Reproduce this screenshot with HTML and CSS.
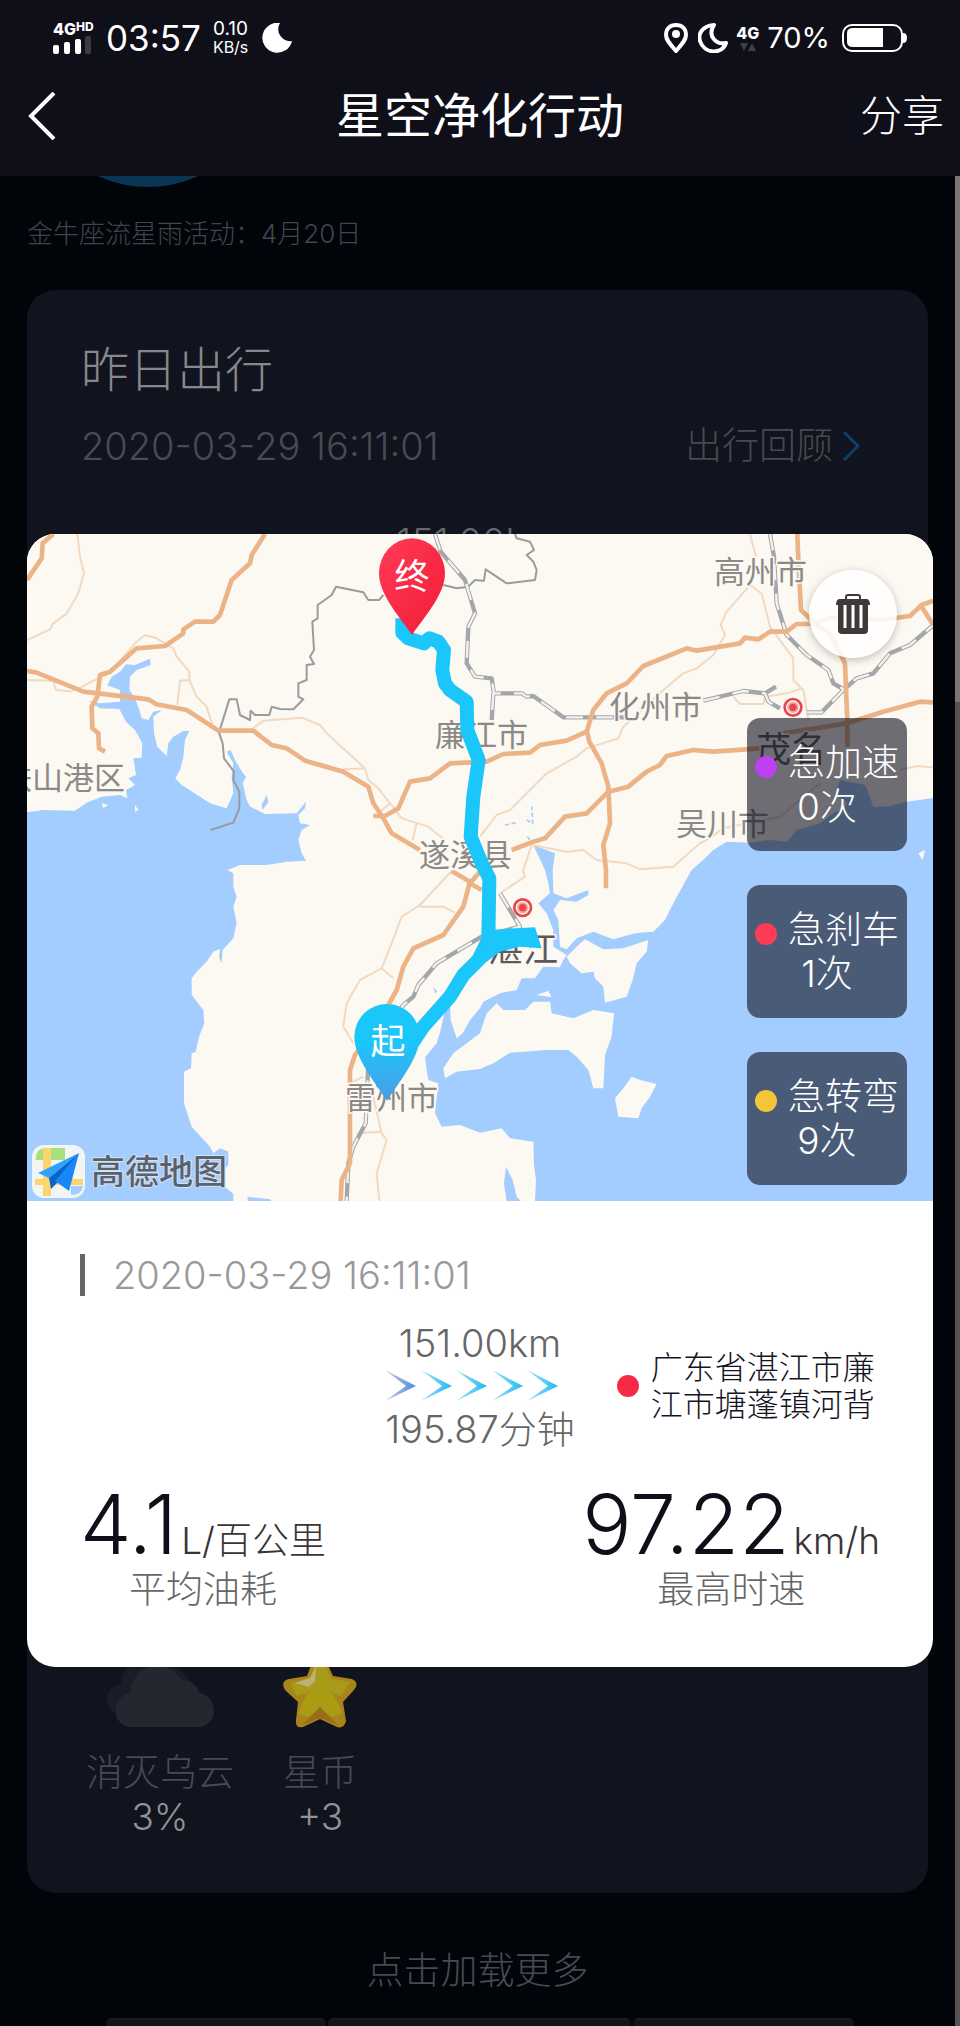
FILE: index.html
```html
<!DOCTYPE html>
<html lang="zh-CN">
<head>
<meta charset="utf-8">
<meta name="viewport" content="width=device-width, initial-scale=1">
<title>星空净化行动</title>
<link rel="stylesheet" href="styles.css">
</head>
<body>
<header class="top">
    <div class="status">
        <div class="signal">
            <span class="net">4G<small>HD</small></span>
            <svg width="38" height="18" viewBox="0 0 38 18"><g fill="#fff"><rect x="0" y="9" width="6" height="9" rx="2"/><rect x="11" y="6" width="6" height="12" rx="2"/><rect x="22" y="3" width="6" height="15" rx="2"/></g><rect x="32" y="0" width="6" height="18" rx="2" fill="#3b3b46"/></svg>
        </div>
        <span class="clock">03:57</span>
        <span class="speed">0.10<br><small>KB/s</small></span>
        <svg width="30" height="30" viewBox="0 0 30 30"><path d="M18 0A15 15 0 1 0 30 18A12 12 0 0 1 18 0Z" fill="#fff"/></svg>
        <div class="status-right">
            <svg width="24" height="30" viewBox="0 0 24 30"><path d="M12 2C6 2 2 6 2 12C2 17 6 21 12 28C18 21 22 17 22 12C22 6 18 2 12 2Z" fill="none" stroke="#fff" stroke-width="4"/><circle cx="12" cy="11" r="4" fill="#fff"/></svg>
            <svg class="moon" width="30" height="30" viewBox="0 0 30 30"><path d="M16 2C3 3 0 12 2 18C6 31 24 32 28 20C18 22 9 13 16 2Z" fill="none" stroke="#fff" stroke-width="4" stroke-linejoin="round"/></svg>
            <div class="data"><span>4G</span><svg width="16" height="8" viewBox="0 0 16 8" fill="#3f3f49"><path d="M0 0H8L4 8ZM8 8L12 0L16 8Z"/></svg></div>
            <span class="percent">70%</span>
            <svg width="65" height="28" viewBox="0 0 65 28"><rect x="1" y="1" width="59" height="26" rx="9" fill="none" stroke="#fff" stroke-width="2"/><path d="M11 4H41V23H11Q5 23 5 18V9Q5 4 11 4Z" fill="#fff"/><path d="M61 9Q65 9 65 14T61 19Z" fill="#fff"/></svg>
        </div>
    </div>
    <nav class="nav">
        <button class="back" type="button" aria-label="返回"><svg width="28" height="48" viewBox="0 0 28 48"><path d="M26 1L3 24L26 47" fill="none" stroke="#fff" stroke-width="4"/></svg></button>
        <h1>星空净化行动</h1>
        <button class="share" type="button">分享</button>
    </nav>
</header>
<main class="page">
    <svg class="planet" width="102" height="12" viewBox="0 0 102 12"><circle cx="51" cy="-108" r="119" fill="#0a3554"/></svg>
    <p class="activity">金牛座流星雨活动：4月20日</p>
    <section class="card">
        <h2>昨日出行</h2>
        <div class="card-row">
            <time>2020-03-29 16:11:01</time>
            <a class="review" href="#">出行回顾<svg width="18" height="30" viewBox="0 0 18 30"><path d="M2 1L16 15L2 29" fill="none" stroke="#0b3f70" stroke-width="3"/></svg></a>
        </div>
        <div class="trip">151.00km</div>
        <ul class="rewards">
            <li>
                <svg width="110" height="72" viewBox="0 0 110 72"><path d="M18 62C-4 54 -2 30 16 28C18 2 48 -2 58 10C72 6 88 26 92 36Z" fill="#191d27"/><path d="M27 71C7 71 4 42 25 37C30 2 66 4 76 24C86 24 92 30 95 37C115 42 113 71 92 71Z" fill="#23272f"/></svg>
                <span>消灭乌云</span>
                <strong>3%</strong>
            </li>
            <li>
                <svg width="74" height="72" viewBox="0 0 74 72"><path d="M30 4Q37 -4 43 5L50 20L69 23Q77 27 71 34L60 46L63 65Q61 73 54 71L37 63L20 71Q12 73 13 64L15 46L2 34Q-3 25 6 23L24 20Z" fill="#a8851b"/><path d="M37 2L49 23L67 26L58 40L48 36L37 28L26 36L14 40L7 27L26 22Z" fill="#a79b19"/><path d="M37 27Q54 38 59 58L49 61L37 53L25 61L16 58Q20 37 37 27Z" fill="#a99c13"/><path d="M37 51L55 69L37 62L19 69Z" fill="#966d1b"/><path d="M12 27L27 22L33 10L32 25L26 31Z" fill="#b9b07a"/></svg>
                <span>星币</span>
                <strong>+3</strong>
            </li>
        </ul>
    </section>
    <button class="more" type="button">点击加载更多</button>
    <div class="tabs"><i></i><i></i><i></i></div>
    <div class="scrollbar"><i></i></div>
</main>

<div class="modal" role="dialog" aria-label="行程">
    <div class="map">
        <svg class="map-canvas" viewBox="0 0 906 667">
            <defs>
                <linearGradient id="blue" x1="0" y1="0" x2="0" y2="1"><stop offset="0.4" stop-color="#1bc6fb"/><stop offset="1" stop-color="#4b9be4"/></linearGradient>
                <linearGradient id="red" x1="0" y1="0" x2="1" y2="1"><stop offset="0" stop-color="#ff3b55"/><stop offset="1" stop-color="#f21c38"/></linearGradient>
            </defs>
            <rect width="906" height="667" fill="#fcf9f2"/>
            <!-- 地图底图 -->
            <g transform="translate(-7 -4) scale(.33333)" fill="none" stroke-linejoin="round">
                <g fill="#a3ccff">
                    <path d="M15 848L70 840L165 842L200 818L245 800L300 795L322 805L318 780L345 765L325 745L348 735L340 685L365 683L367 640L345 600L318 575L298 537L240 535L205 512L240 520L300 515L300 480L262 466L275 440L300 425L318 403L345 405L390 386L392 405L350 420L330 440L328 480L345 505L358 540L365 565L385 570L400 545L425 540L400 560L402 610L412 650L440 678L445 640L460 620L490 603L508 603L495 630L490 680L480 720L466 745L485 765L540 800L570 820L620 835L640 790L635 740L640 700L620 665L632 660L645 690L668 728L678 740L668 760L680 810L690 830L735 852L830 850L858 815L855 835L835 855L840 880L870 885L845 900L835 930L845 970L858 992L800 995L740 1005L660 1005L622 1020L640 1030L640 1070L650 1100L640 1130L650 1180L640 1225L608 1260L605 1300L597 1280L600 1257L580 1265L560 1295L530 1325L515 1345L515 1395L550 1440L553 1480L537 1520L527 1565L515 1570L513 1615L492 1625L492 1720L515 1790L570 1850L580 1870L600 1855L625 1865L625 1905L610 1920L615 1970L640 1992L640 2015H15Z"/>
                    <path d="M682 2000L750 2008L755 2015H685ZM740 795L745 815L728 840L725 825ZM1240 1370L1252 1385L1245 1390Z"/>
                    <path d="M2745 803L2660 815L2610 828L2560 832L2550 800L2535 765L2460 750L2445 795L2480 815L2475 835L2440 850L2400 880L2330 900L2300 935L2250 930L2190 938L2120 935L2080 960L2055 985L2015 1020L1965 1110L1935 1170L1900 1205L1845 1210L1780 1228L1720 1205L1670 1225L1640 1258L1620 1250L1615 1170L1600 1140L1620 1110L1670 1115L1705 1095L1705 1080L1640 1105L1600 1090L1598 1020L1605 970L1540 945L1575 1020L1585 1060L1590 1090L1555 1120L1580 1150L1600 1200L1600 1250L1640 1275L1630 1290L1620 1312L1570 1310L1545 1345L1505 1345L1490 1380L1440 1390L1390 1415L1380 1435L1350 1470L1328 1510L1310 1525L1292 1470L1290 1420L1275 1440L1262 1500L1250 1540L1215 1582L1220 1620L1225 1650L1255 1660L1245 1750L1265 1790L1320 1785L1380 1808L1445 1795L1470 1825L1540 1835L1542 1905L1548 1950L1545 2015H2745Z"/>
                    <path d="M1458 1910L1478 1950L1490 2000L1505 2015H1460L1452 1960Z"/>
                </g>
                <g fill="#fcf9f2">
                    <path d="M1380 1510L1300 1570L1270 1615L1275 1645L1310 1625L1380 1617L1420 1600L1470 1568L1580 1560L1645 1560L1670 1580L1705 1620L1720 1675L1750 1675L1755 1575L1775 1520L1782 1450L1720 1440L1660 1465L1595 1450L1590 1415L1540 1415L1515 1440L1450 1440L1430 1420L1400 1450Z"/>
                    <path d="M1640 1280L1670 1250L1695 1228L1750 1258L1810 1255L1885 1230L1880 1265L1850 1300L1838 1350L1820 1400L1755 1418L1750 1370L1725 1345L1720 1325L1685 1330L1650 1300Z"/>
                    <path d="M1550 1395L1585 1382L1595 1402Z"/>
                    <path d="M1785 1705L1810 1675L1835 1640L1860 1650L1910 1662L1890 1700L1865 1735L1855 1765L1795 1760Z"/>
                    <path d="M245 820L265 825L250 835ZM345 825L355 840L345 845ZM2695 970L2715 960L2708 990Z"/>
                </g>
                <path d="M1455 885L1490 878M1520 870L1538 880L1535 830M1522 920L1535 935" stroke="#a3ccff" stroke-width="5" stroke-dasharray="12 8"/>
                <g stroke="#f2d9bf" stroke-width="6">
                    <path d="M172 12L180 80L192 130L175 190L140 250L100 280L90 298L21 330M185 470L270 428L345 340L375 315L410 325L460 355L470 380L508 425V450L480 452L472 525M508 450L530 500L560 530L580 595M21 450L100 452L108 480L150 484L190 470"/>
                    <path d="M700 595L730 572L845 563L900 585L920 610L1035 715L970 718M1035 715L1045 750L1075 775L1110 820L1075 850M1110 820L1145 865L1225 890L1268 925M1190 880L1178 930"/>
                    <path d="M1380 920L1430 855L1470 840L1580 730L1670 680L1700 655L1795 625L1810 590L1930 480L1990 430L2030 415L2080 375L2115 315L2102 285L2120 245L2190 165L2225 190L2250 290L2320 385V450L2350 480L2365 570M2190 12L2208 80M2140 500L2160 522H2230L2235 500L2300 490L2345 475"/>
                    <path d="M1510 1020L1535 945L1640 965L1690 960L1730 990L1820 1000L1860 1018L1960 1010L2040 940L2060 930L2110 895L2280 860L2400 760M2640 720L2690 708L2740 712M1440 1090L1515 1040L1508 1020"/>
                    <path d="M1295 1023L1200 1125L1145 1160L1115 1240L1085 1315L1120 1345M1200 1130H1270L1305 1148M1085 1315L1020 1350L980 1420L970 1490L1000 1540M1060 1700L1085 1810L1100 1830L1070 1930L1078 2013M1010 1810L1085 1805M990 1660L1030 1640"/>
                </g>
                <path d="M572 900L640 878L658 835V785L640 750L642 725L612 685L608 640L597 608L628 508H650L660 555L690 570L692 542L705 555H748L755 530L780 537L820 538L850 508L835 500V460L860 450V405L882 402L870 380L882 360L877 275L893 265V225L935 195L948 170L1030 187L1045 210H1078L1090 195M1270 165L1310 175L1345 170L1365 150L1392 152L1397 118L1460 160L1545 150L1550 120L1540 95L1520 75L1542 60L1530 35L1490 25L1485 12" stroke="#999b9d" stroke-width="6"/>
                <g stroke="#a3a7a9" stroke-width="13">
                    <path d="M1245 12L1262 65L1335 150L1365 250L1345 290L1340 400L1365 440L1415 445L1422 490L1505 490L1520 500L1540 498L1630 562L1820 562M2050 512L2100 500L2170 483L2235 490L2245 515L2280 535M2360 547H2405L2470 480L2510 445L2560 430L2610 370L2670 345L2740 285M1420 490L1415 570M2250 12L2262 80L2270 220L2300 315L2360 375L2425 420L2440 460L2475 480M2235 490L2268 470"/>
                    <path d="M1440 1090L1500 1190L1385 1220L1250 1300L1195 1365L1180 1400L1150 1425L1100 1500L1045 1600L1037 1780L1000 1850L985 1900L980 2013"/>
                </g>
                <g stroke="#f4f2ee" stroke-width="7" stroke-dasharray="50 40">
                    <path d="M1245 12L1262 65L1335 150L1365 250L1345 290L1340 400L1365 440L1415 445L1422 490L1505 490L1520 500L1540 498L1630 562L1820 562M2050 512L2100 500L2170 483L2235 490L2245 515L2280 535M2360 547H2405L2470 480L2510 445L2560 430L2610 370L2670 345L2740 285M1420 490L1415 570M2250 12L2262 80L2270 220L2300 315L2360 375L2425 420L2440 460L2475 480"/>
                    <path d="M1440 1090L1500 1190L1385 1220L1250 1300L1195 1365L1180 1400L1150 1425L1100 1500L1045 1600L1037 1780L1000 1850L985 1900L980 2013"/>
                </g>
                <g stroke="#ebb386" stroke-width="14">
                    <path d="M21 150L65 85L68 40L100 12M735 12L695 75L690 100L635 150L600 255L580 275H525L490 298V310L435 348L350 355L270 425L240 435L232 500L215 530L217 595L235 610L237 655L255 665"/>
                    <path d="M21 423L50 428L190 485L385 508L410 523L500 540L595 602H700L755 645L800 655L855 692L970 725L1045 770L1060 820L1090 865L1115 910L1200 960"/>
                    <path d="M1060 858H1095L1135 835L1170 755L1230 745L1290 700L1400 695L1450 672L1530 668L1560 645L1640 632L1700 605L1720 540L1760 490L1820 460L1870 408L2000 355L2030 362L2160 340L2175 323L2215 328L2250 305H2300L2330 282H2370L2430 265L2500 262L2580 270L2670 258L2705 225L2740 212M2705 230L2740 285"/>
                    <path d="M2332 12L2335 90L2343 240L2390 285L2430 310L2455 360L2475 400L2482 575V650M2740 517L2700 515L2590 545L2480 580L2290 610M1475 960L1540 935L1575 925L1635 860L1700 850L1765 785L1825 770L1880 725L1920 705L1940 678L2020 660L2080 665L2220 655M1700 600L1708 635L1745 700L1765 770L1770 880L1750 945L1758 1020V1075"/>
                    <path d="M1295 1023L1350 1055L1330 1130L1270 1215L1180 1255L1150 1310L1130 1380L1105 1425L1060 1500L1005 1575L990 1620V1900L965 1950L962 2013M1380 1025L1350 1060L1385 1080"/>
                </g>
                <g fill="#fcf9f2" stroke="#e8464f" stroke-width="8"><circle cx="2319" cy="532" r="25"/><circle cx="1508" cy="1133" r="25"/></g>
                <g fill="#e8464f" stroke="#f5a59e" stroke-width="6"><circle cx="2319" cy="532" r="14"/><circle cx="1508" cy="1133" r="14"/></g>
            </g>
            <g class="places">
                <text x="687" y="49">高州市</text>
                <text x="582" y="184">化州市</text>
                <text x="408" y="212">廉江市</text>
                <text x="392" y="332">遂溪县</text>
                <text x="649" y="301">吴川市</text>
                <text x="318" y="575">雷州市</text>
                <text x="-26" y="255">铁山港区</text>
                <text class="city" x="729" y="228">茂名</text>
                <text class="city" x="461" y="428">湛江</text>
            </g>
            <!-- 行驶轨迹 -->
            <g transform="translate(-7 -4) scale(.33333)">
                <path d="M1147 265L1147 308L1165 325L1212 340L1228 325L1255 335L1272 360L1267 420L1275 460L1290 480L1340 515L1342 600L1376 690L1360 800L1352 920L1385 1000L1408 1045L1405 1230L1375 1290L1330 1335L1290 1400L1210 1490L1130 1610L1085 1680" fill="none" stroke="#1bc6fb" stroke-width="42" stroke-linejoin="round"/>
                <path d="M1400 1200L1545 1192L1565 1255L1500 1250L1440 1265L1380 1310Z" fill="#1bc6fb"/>
                <path d="M1176 315C1130 250 1077 190 1077 130A99 105 0 0 1 1275 130C1275 190 1222 250 1176 315Z" fill="url(#red)"/>
                <path d="M1101 1712C1060 1650 1003 1580 1003 1520A98 98 0 0 1 1199 1520C1199 1580 1142 1650 1101 1712Z" fill="url(#blue)"/>
            </g>
            <g class="pins">
                <text x="385" y="55">终</text>
                <text x="361" y="520">起</text>
            </g>
            <g class="amap">
                <rect x="5" y="611" width="53" height="53" rx="12" fill="#f3f5f4"/>
                <path d="M9 624Q9 614 19 614H38V626H8Z" fill="#a9e07d"/><path d="M16 614H24V662H16ZM8 645H56V651H8Z" fill="#fcd66c"/><path d="M44 652H56Q55 661 44 661Z" fill="#a3ccff"/>
                <path d="M52 619L11 639L22 644Z" fill="#2ba2ff"/><path d="M52 619L22 644L24 655L31 648Z" fill="#0965c5"/><path d="M52 619L28 647L42 657Z" fill="#1788f5"/>
                <text x="64" y="650">高德地图</text>
            </g>
        </svg>
        <button class="trash" type="button" aria-label="删除"><svg width="34" height="40" viewBox="0 0 34 40"><path d="M10 6V3Q10 1 12 1H22Q24 1 24 3V6" fill="none" stroke="#3d3a39" stroke-width="2"/><path d="M3 5H31Q34 6 34 11H0Q0 6 3 5Z" fill="#3d3a39"/><path d="M2 10H32V36Q32 40 28 40H6Q2 40 2 36Z" fill="#3d3a39"/><path d="M9 11V34M17 11V34M25 11V34" stroke="#fff" stroke-width="3"/></svg></button>
        <ul class="events">
            <li><p class="accel"><i></i>急加速</p><p>0次</p></li>
            <li><p class="brake"><i></i>急刹车</p><p>1次</p></li>
            <li><p class="turn"><i></i>急转弯</p><p>9次</p></li>
        </ul>
    </div>
    <div class="detail">
        <time class="when">2020-03-29 16:11:01</time>
        <div class="route">
            <div class="middle">
                <span>151.00km</span>
                <svg class="arrows" width="174" height="32" viewBox="0 0 174 32">
                    <defs>
                        <linearGradient id="a1"><stop offset="0" stop-color="#8f8fb0" stop-opacity=".5"/><stop offset="1" stop-color="#3f8ff0"/></linearGradient>
                        <linearGradient id="a2"><stop offset="0" stop-color="#3cc4f0" stop-opacity=".5"/><stop offset="1" stop-color="#20b8f0"/></linearGradient>
                    </defs>
                    <path d="M0 0L31 16L0 31L21 16Z" fill="url(#a1)"/>
                    <path d="M36 0L67 16L36 31L57 16Z" fill="url(#a2)"/>
                    <path d="M71 0L102 16L71 31L92 16Z" fill="url(#a2)"/>
                    <path d="M107 0L138 16L107 31L128 16Z" fill="url(#a2)"/>
                    <path d="M142 0L173 16L142 31L163 16Z" fill="url(#a2)"/>
                </svg>
                <span>195.87分钟</span>
            </div>
            <div class="address"><i></i><span>广东省湛江市廉江市塘蓬镇河背</span></div>
        </div>
        <div class="stats">
            <dl><dd><b>4.1</b>L/百公里</dd><dt>平均油耗</dt></dl>
            <dl><dd><b>97.22</b>km/h</dd><dt>最高时速</dt></dl>
        </div>
    </div>
</div>
</body>
</html>
```
FILE: styles.css
```css
* {
    box-sizing: border-box;
}
body, h1, h2, p, ul, dl, dd {
    margin: 0;
    padding: 0;
}
body {
    position: relative;
    min-height: 100vh;
    background: #010408;
    color: #fff;
    font-family: Inter, "Noto Sans CJK SC", sans-serif;
    font-size: 37px;
    font-weight: 300;
    line-height: 44px;
}
ul {
    list-style: none;
}
svg {
    display: block;
    flex: none;
}
button {
    padding: 0;
    border: 0;
    background: none;
    color: inherit;
    font: inherit;
    cursor: pointer;
}
.top {
    height: 176px;
    background: #0f0f1a;
}
.status {
    display: flex;
    align-items: center;
    height: 76px;
    padding: 0 53px;
}
.signal {
    width: 41px;
    margin-right: 12px;
}
.net {
    display: flex;
    font-size: 16px;
    font-weight: 800;
    line-height: 14px;
}
.net small {
    font-size: 12px;
    line-height: 10px;
}
.clock {
    margin-right: 12px;
    font-size: 35px;
    font-weight: 400;
}
.speed {
    margin-right: 14px;
    font-size: 19px;
    font-weight: 400;
    line-height: 18px;
}
.speed small {
    font-size: 16px;
}
.status-right {
    display: flex;
    align-items: center;
    margin-left: auto;
}
.moon {
    margin: 0 8px 0 10px;
}
.data {
    margin-right: 8px;
    font-size: 16px;
    font-weight: 800;
    line-height: 16px;
}
.data svg {
    margin: 2px 0 0 4px;
}
.percent {
    margin-right: 12px;
    font-size: 29px;
    font-weight: 400;
}
.nav {
    display: grid;
    grid-template-columns: 1fr auto 1fr;
    align-items: center;
    height: 80px;
    padding: 0 16px;
}
.nav h1 {
    font-size: 48px;
    font-weight: 400;
    line-height: 60px;
}
.share {
    justify-self: end;
    font-size: 42px;
}
.back {
    justify-self: start;
    padding-left: 12px;
}

/* 背景页面 */
.page {
    position: relative;
    padding: 0 32px 0 27px;
}
.planet {
    margin-left: 70px;
}
.activity {
    margin: 28px 0 38px;
    color: #42454d;
    font-size: 26px;
    line-height: 36px;
}
.card {
    padding: 50px 54px 54px;
    border-radius: 28px;
    background: #11131e;
}
.card h2 {
    color: #87888c;
    font-size: 48px;
    font-weight: 300;
    line-height: 60px;
}
.card-row {
    display: flex;
    justify-content: space-between;
    margin-top: 24px;
    padding-right: 14px;
    color: #484a54;
}
.card-row time {
    font-size: 38px;
}
.review {
    display: flex;
    align-items: center;
    gap: 9px;
    color: #484a50;
    text-decoration: none;
}
.trip {
    height: 1136px;
    margin-top: 52px;
    color: #66676d;
    font-size: 38px;
    text-align: center;
}
.rewards {
    display: flex;
    gap: 49px;
    padding-left: 5px;
    color: #484a54;
}
.rewards li {
    display: flex;
    flex-direction: column;
    align-items: center;
}
.rewards span {
    margin-top: 23px;
}
.rewards strong {
    color: #929296;
    font-weight: 300;
}
.more {
    display: block;
    margin: 56px auto 25px;
    color: #484a54;
}
.tabs {
    display: grid;
    grid-template-columns: 220fr 304fr 221fr;
    gap: 2px;
    padding: 0 74px 0 79px;
}
.tabs i {
    height: 8px;
    border-top: 2px solid #1b1c1f;
    border-radius: 6px 6px 0 0;
    background: #131417;
}
.scrollbar {
    position: absolute;
    top: 0;
    right: 0;
    bottom: 0;
    width: 5px;
    background: #555453;
}
.scrollbar i {
    display: block;
    height: 526px;
    background: #777674;
}

/* 行程弹窗 */
.modal {
    position: absolute;
    top: 534px;
    left: 27px;
    right: 27px;
    overflow: hidden;
    border-radius: 28px;
    background: #fff;
}
.map {
    position: relative;
}
.map-canvas {
    width: 100%;
    height: auto;
}
.places {
    fill: #8b8986;
    stroke: #fcf9f2;
    stroke-width: 3px;
    paint-order: stroke;
    font-size: 31px;
    font-weight: 400;
}
.places .city {
    fill: #5c5a5a;
    font-size: 35px;
}
.pins {
    fill: #fff;
    font-size: 35px;
    font-weight: 400;
    text-anchor: middle;
}
.amap text {
    fill: #596270;
    stroke: #d5e2f0;
    stroke-width: 2px;
    paint-order: stroke;
    font-size: 34px;
    font-weight: 500;
}
.trash {
    position: absolute;
    top: 36px;
    right: 36px;
    display: grid;
    place-items: center;
    width: 88px;
    height: 88px;
    border-radius: 50%;
    background: rgba(255, 255, 255, .85);
    box-shadow: 0 2px 8px rgba(0, 0, 0, .25);
}
.events {
    position: absolute;
    top: 184px;
    right: 26px;
    display: flex;
    flex-direction: column;
    gap: 34px;
}
.events li {
    width: 160px;
    padding: 23px 8px 22px;
    border-radius: 13px;
    background: rgba(15, 15, 30, .6);
}
.events p {
    display: flex;
    align-items: center;
    justify-content: center;
}
.events i {
    width: 22px;
    height: 22px;
    margin: 8px 11px 0 0;
    border-radius: 50%;
}
.accel i {
    background: #bf40f0;
}
.brake i {
    background: #ff3c55;
}
.turn i {
    background: #f2c638;
}
.detail {
    padding: 53px 53px 55px;
}
.when {
    display: block;
    padding-left: 28px;
    border-left: 5px solid #666;
    color: #999;
    font-size: 38px;
    line-height: 42px;
}
.route {
    display: grid;
    grid-template-columns: 1fr auto 1fr;
    align-items: center;
    margin-top: 25px;
    color: #666;
}
.middle {
    grid-column: 2;
    display: flex;
    flex-direction: column;
    align-items: center;
    gap: 5px;
    font-size: 38px;
}
.arrows {
    align-self: flex-start;
}
.address {
    display: flex;
    align-items: center;
    gap: 12px;
    padding-left: 42px;
    color: #14141f;
    font-size: 32px;
    line-height: 37px;
}
.address i {
    flex: none;
    width: 22px;
    height: 22px;
    border-radius: 50%;
    background: #f72a45;
}
.address span {
    width: 7em;
}
.stats {
    display: flex;
    justify-content: space-between;
    margin-top: 34px;
    text-align: center;
}
.stats dd {
    display: flex;
    align-items: baseline;
    gap: 4px;
    height: 80px;
    color: #3a3436;
}
.stats b {
    color: #0f0f1a;
    font-size: 82px;
    font-weight: 300;
    line-height: 80px;
}
.stats dt {
    margin-top: 3px;
    color: #666;
}
```
